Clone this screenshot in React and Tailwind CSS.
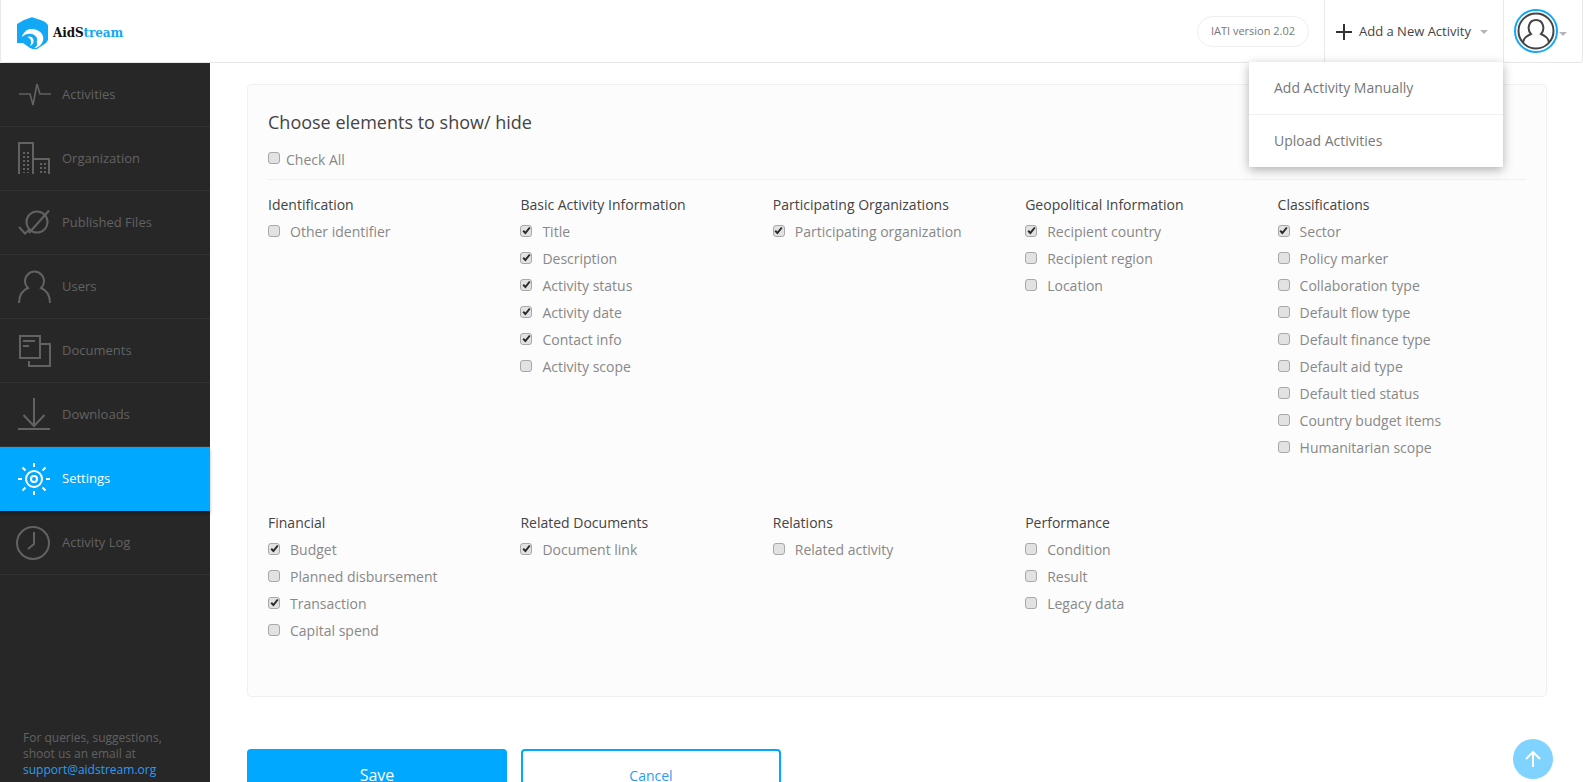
import React from 'react';

const font = "font-['Open_Sans',sans-serif]";

const Logo = () => (
    <svg width="33" height="33" viewBox="0 0 33 33" className="shrink-0">
        <path d="M8 3 L15 0.5 Q16 0.2 17 0.5 L26 3.5 Q32 6 32 9 V23 Q31 26 27 28 L21 32 Q18 33 14 31 L7 26 H1 V7 Z" fill="#12a8f6" />
        <path d="M5.7 20.3 C8 14 12 11.5 16 12 C23 12.5 28 17 27.3 22 C27 27 22 31 18 31.3 C21 29.5 22 27 20.7 25.3 C21.5 22 21 20 19 18.7 C16 16 10 16 5.7 20.3 Z" fill="#fff" />
        <path d="M11 20 C14 18.5 17 20 17.5 23 C18 26 16.5 28 14 29 C16 26 15.5 21 11 20 Z" fill="#fff" />
    </svg>
);

const IconWrap = ({ children, color }) => (
    <svg width="34" height="34" viewBox="0 0 34 34" fill="none" stroke={color || '#626262'} strokeWidth="2" className="shrink-0 overflow-visible">{children}</svg>
);

const icons = {
    activities: <path d="M1 16 H12 L15 27 L19 6 L22 16 H33" strokeWidth="1.6" />,
    organization: (
        <>
            <path d="M1 32 V1 H15 V32 M15 17 H31 V32" />
            <path d="M6 10 V31 M10 10 V31 M23 21 V31 M27 21 V31" strokeDasharray="2 2" />
        </>
    ),
    published: (
        <>
            <circle cx="19" cy="16" r="10.5" />
            <path d="M31 4.5 L11 27 M1 21 L7 27.5 L12 23" />
        </>
    ),
    users: <path d="M1 33 C1 25 5 20 10 18 A9.5 9.5 0 1 1 23 18 C28 20 32 25 32 33" />,
    documents: (
        <>
            <path d="M2 2 H22 V24 H2 Z M5 7 H17 M5 12 H11" />
            <path d="M23 10 H32 V32 H11 V27" />
        </>
    ),
    downloads: <path d="M16 0 V27 M5.5 17 L16 28 L26.5 17 M0 31 H32" />,
    settings: (
        <>
            <circle cx="16" cy="17" r="8" />
            <circle cx="16" cy="17" r="3" />
            <path d="M16 1 V5 M16 29 V33 M0 17 H4 M28 17 H32 M4.5 5.5 L7.5 8.5 M24.5 25.5 L27.5 28.5 M4.5 28.5 L7.5 25.5 M24.5 8.5 L27.5 5.5" />
        </>
    ),
    clock: (
        <>
            <circle cx="15" cy="17" r="16" />
            <path d="M16 6 V18 L10 23" />
        </>
    ),
};

const navItems = [
    { label: 'Activities', icon: 'activities' },
    { label: 'Organization', icon: 'organization' },
    { label: 'Published Files', icon: 'published' },
    { label: 'Users', icon: 'users' },
    { label: 'Documents', icon: 'documents' },
    { label: 'Downloads', icon: 'downloads' },
    { label: 'Settings', icon: 'settings', active: true },
    { label: 'Activity Log', icon: 'clock' },
];

const groups = [
    [
        { title: 'Identification', items: [['Other identifier', false]] },
        { title: 'Basic Activity Information', items: [['Title', true], ['Description', true], ['Activity status', true], ['Activity date', true], ['Contact info', true], ['Activity scope', false]] },
        { title: 'Participating Organizations', items: [['Participating organization', true]] },
        { title: 'Geopolitical Information', items: [['Recipient country', true], ['Recipient region', false], ['Location', false]] },
        { title: 'Classifications', items: [['Sector', true], ['Policy marker', false], ['Collaboration type', false], ['Default flow type', false], ['Default finance type', false], ['Default aid type', false], ['Default tied status', false], ['Country budget items', false], ['Humanitarian scope', false]] },
    ],
    [
        { title: 'Financial', items: [['Budget', true], ['Planned disbursement', false], ['Transaction', true], ['Capital spend', false]] },
        { title: 'Related Documents', items: [['Document link', true]] },
        { title: 'Relations', items: [['Related activity', false]] },
        { title: 'Performance', items: [['Condition', false], ['Result', false], ['Legacy data', false]] },
    ],
];

const CheckBox = ({ checked, className }) => (
    <span className={`w-[12px] h-[12px] rounded-[3px] border border-[#a8a8a8] bg-[#e2e2e2] flex items-center justify-center shrink-0 ${className}`}>
        {checked && (
            <svg width="9" height="9" viewBox="0 0 9 9" fill="none" stroke="#2b2b2b" strokeWidth="2">
                <path d="M1.2 4.8 L3.4 7 L7.8 1.5" />
            </svg>
        )}
    </span>
);

const Caret = () => <span className="w-0 h-0 border-x-[4px] border-x-transparent border-t-[4px] border-t-[#b5b5b5]" />;

export default function App() {
    return (
        <div className={`h-screen overflow-hidden flex flex-col bg-white ${font}`}>
            <header className="h-[63px] shrink-0 flex items-stretch justify-between border border-t-0 border-[#e8e8e8] rounded-b-[3px] relative">
                <div className="flex items-center pl-[15px] gap-[4px] pt-[4px]">
                    <Logo />
                    <span className="font-['DejaVu_Serif',serif] font-bold text-[12px] tracking-[-0.1px] text-[#111]">AidS<span className="text-[#12a8f6]">tream</span></span>
                </div>
                <div className="flex items-stretch">
                    <div className="flex items-center pr-[15px]">
                        <span className="h-[31px] w-[112px] flex items-center justify-center rounded-full border border-[#eeeeee] text-[11px] text-[#777]">IATI version 2.02</span>
                    </div>
                    <div className="w-[179px] border-l border-[#e8e8e8] flex items-center pl-[11px] pt-[1px]">
                        <svg width="16" height="16" viewBox="0 0 16 16" stroke="#333" strokeWidth="2" className="shrink-0"><path d="M8 0 V16 M0 8 H16" /></svg>
                        <span className="text-[13px] text-[#444] ml-[7px]">Add a New Activity</span>
                        <span className="ml-[9px] pt-[1px] flex"><Caret /></span>
                    </div>
                    <div className="w-[79px] border-l border-[#e8e8e8] flex items-center pl-[10px]">
                        <svg width="44" height="44" viewBox="0 0 44 44" fill="none" className="shrink-0">
                            <circle cx="22" cy="22" r="21" stroke="#12a8f6" strokeWidth="2" />
                            <circle cx="22" cy="22" r="17.5" stroke="#444" strokeWidth="2" />
                            <path d="M9 34 C9 29 13 27 17 25 C13 21 14 11 22 11 C30 11 31 21 27 25 C31 27 35 29 35 34" stroke="#444" strokeWidth="2" />
                        </svg>
                        <span className="flex pt-[6px] ml-[1px]"><Caret /></span>
                    </div>
                </div>
                <div className="absolute z-10 right-[79px] top-[62px] w-[254px] bg-white shadow-[0_3px_10px_rgba(0,0,0,0.3)] text-[14px] text-[#777]">
                    <div className="h-[53px] flex items-center pl-[25px] pb-[2px] border-b border-[#f0f0f0]">Add Activity Manually</div>
                    <div className="h-[52px] flex items-center pl-[25px] pb-[2px]">Upload Activities</div>
                </div>
            </header>

            <div className="flex-1 flex min-h-0">
                <aside className="w-[210px] shrink-0 bg-[#272727] flex flex-col">
                    {navItems.map((item) => (
                        <div
                            key={item.label}
                            className={`h-[64px] shrink-0 flex items-center pl-[18px] gap-[10px] text-[13px] ${item.active ? 'bg-[#00a8ff] text-white shadow-[0_3px_3px_rgba(0,0,0,0.3)]' : 'border-b border-[#333333] text-[#626262]'}`}
                        >
                            <IconWrap color={item.active ? '#ffffff' : undefined}>{icons[item.icon]}</IconWrap>
                            <span>{item.label}</span>
                        </div>
                    ))}
                    <div className="mt-auto pl-[23px] pb-[4px] text-[12px] leading-[16px] text-[#626262]">
                        <p>For queries, suggestions,</p>
                        <p>shoot us an email at</p>
                        <p className="text-[#2a9df4]">support@aidstream.org</p>
                    </div>
                </aside>

                <main className="flex-1 min-w-0 pl-[37px] pr-[36px] pt-[21px] relative">
                    <section className="h-[613px] border border-[#f0f0f0] rounded-[4px] bg-[#fcfcfc] pl-[20px] pr-[16px] pt-[25px]">
                        <h2 className="text-[18px] leading-[25px] text-[#444]">Choose elements to show/ hide</h2>
                        <label className="flex items-center gap-[6px] mt-[15px] h-[20px] text-[14px] text-[#888] pb-[2px]">
                            <CheckBox className="mb-[3px]" />
                            <span>Check All</span>
                        </label>
                        <div className="border-b border-[#f0f0f0] mt-[9px] mr-[4px]" />
                        {groups.map((row, i) => (
                            <div key={i} className={`grid grid-cols-5 ${i === 0 ? 'h-[318px] mt-[15px]' : ''}`}>
                                {row.map((group) => (
                                    <div key={group.title}>
                                        <h3 className="text-[14px] leading-[20px] text-[#444] mb-[6px]">{group.title}</h3>
                                        <ul>
                                            {group.items.map(([label, checked]) => (
                                                <li key={label} className="h-[27px] flex items-center gap-[10px] text-[14px] text-[#888] pb-[6px]">
                                                    <CheckBox checked={checked} className="mb-[2px]" />
                                                    <span>{label}</span>
                                                </li>
                                            ))}
                                        </ul>
                                    </div>
                                ))}
                            </div>
                        ))}
                    </section>
                    <div className="flex gap-[14px] mt-[52px]">
                        <button className="w-[260px] h-[52px] rounded-[4px] bg-[#00a8ff] text-white text-[16px]">Save</button>
                        <button className="w-[260px] h-[52px] rounded-[4px] border-2 border-[#00a8ff] bg-white text-[#2a9df4] text-[14px]">Cancel</button>
                    </div>
                    <button className="absolute right-[30px] top-[676px] w-[40px] h-[40px] rounded-full bg-[#80d3ff] flex items-center justify-center">
                        <svg width="18" height="18" viewBox="0 0 18 18" fill="none" stroke="#fff" strokeWidth="2"><path d="M9 17 V2 M2 9 L9 2 L16 9" /></svg>
                    </button>
                </main>
            </div>
        </div>
    );
}
